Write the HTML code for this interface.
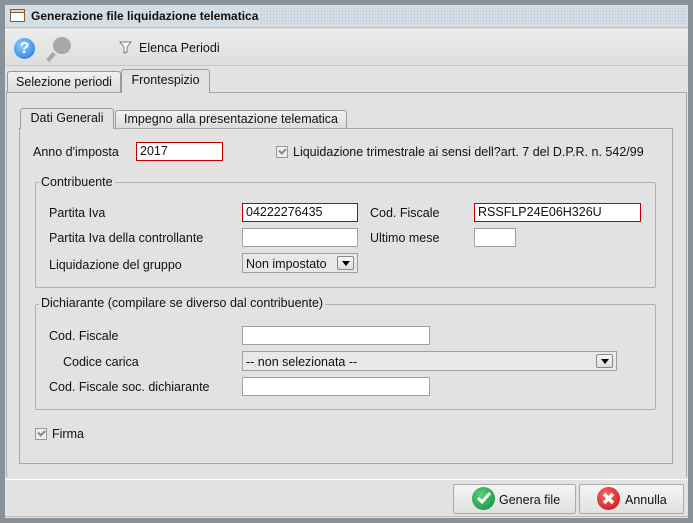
<!DOCTYPE html>
<html><head><meta charset="utf-8"><style>
*{box-sizing:border-box;margin:0;padding:0}
body{width:693px;height:523px;background:#8a9299;font-family:"Liberation Sans",sans-serif;font-size:12.5px;color:#111;position:relative;overflow:hidden}
.a{position:absolute}
.win{left:5px;top:5px;width:683px;height:513px;background:#e2e2e2}
.title{left:5px;top:5px;width:683px;height:23px;background:#d4dce4;border-bottom:1px solid #b8c0c8}
.inp{position:absolute;background:#fff;border:1px solid #a0a0a0;height:19px;font-size:12.5px;padding:1px 3px;line-height:15px}
.red{border-color:#c00000}
.lbl{position:absolute;font-size:12.5px}
.grp{position:absolute;border:1px solid #b0b0b0;border-radius:2px}
.grpt{position:absolute;background:#e2e2e2;padding:0 2px;font-size:12.5px}
.cb{position:absolute;width:12px;height:12px;border:1px solid #999;background:#eee}
.cb:after{content:"";position:absolute;left:2px;top:1px;width:5px;height:3px;border-left:2px solid #888;border-bottom:2px solid #888;transform:rotate(-45deg)}
.arr{position:absolute;width:17px;height:14px;border:1px solid #888;border-radius:2px;background:linear-gradient(#fafafa,#ddd)}
.arr:after{content:"";position:absolute;left:4px;top:4px;border-left:4px solid transparent;border-right:4px solid transparent;border-top:5px solid #000}
.tab{position:absolute;border:1px solid #999;border-bottom:none;border-radius:3px 3px 0 0;background:linear-gradient(#f2f2f2,#dcdcdc);font-size:12.5px;text-align:center}
.btn{position:absolute;border:1px solid #aaa;border-radius:2px;background:linear-gradient(#f6f6f6,#e0e0e0);font-size:12.5px}
</style></head><body>
<div class="a win"></div>
<div class="a title"></div>
<div class="a" style="left:260px;top:7px;width:426px;height:19px;background-image:radial-gradient(#b8c4d0 0.7px,transparent 0.8px);background-size:3px 3px"></div>
<div class="a" style="left:10px;top:9px;width:15px;height:13px;border:1px solid #8a5a30;background:#fff"><div style="height:3px;border-bottom:1px solid #8a5a30;background:#e8d8c0"></div></div>
<div class="lbl" style="left:31px;top:9px;font-weight:bold;font-size:12px">Generazione file liquidazione telematica</div>
<div class="a" style="left:5px;top:29px;width:683px;height:37px;background:linear-gradient(#ececec,#dedede);border-bottom:1px solid #c8c8c8"></div>
<div class="a" style="left:13px;top:37px;width:23px;height:23px;border-radius:50%;background:radial-gradient(circle at 40% 35%,#8fd0ff,#1e6fd8);border:1px solid #d8e8f8;color:#fff;font-weight:bold;font-size:16px;text-align:center;line-height:21px">?</div>
<div class="a" style="left:53px;top:37px;width:18px;height:17px;border-radius:50%;background:#a8a8a8"></div>
<div class="a" style="left:49px;top:52px;width:4px;height:10px;background:#a8a8a8;transform:rotate(40deg)"></div>
<svg class="a" style="left:119px;top:41px" width="13" height="13"><path d="M1 1h11l-4 5v5l-3 1V6z" fill="#fff" stroke="#777"/></svg>
<div class="lbl" style="left:139px;top:41px">Elenca Periodi</div>
<div class="a" style="left:6px;top:92px;width:681px;height:385px;border:1px solid #a8a8a8;border-bottom:none"></div>
<div class="tab" style="left:7px;top:71px;width:114px;height:21px;line-height:20px">Selezione periodi</div>
<div class="tab" style="left:121px;top:69px;width:89px;height:24px;line-height:20px;background:#e2e2e2;z-index:2">Frontespizio</div>
<div class="a" style="left:19px;top:128px;width:654px;height:336px;border:1px solid #a8a8a8"></div>
<div class="tab" style="left:20px;top:108px;width:94px;height:21px;line-height:18px;background:#e2e2e2;z-index:2">Dati Generali</div>
<div class="tab" style="left:115px;top:110px;width:232px;height:18px;line-height:17px">Impegno alla presentazione telematica</div>
<div class="lbl" style="left:33px;top:145px">Anno d'imposta</div>
<div class="inp red" style="left:136px;top:142px;width:87px">2017</div>
<div class="cb" style="left:276px;top:146px"></div>
<div class="lbl" style="left:293px;top:145px">Liquidazione trimestrale ai sensi dell?art. 7 del D.P.R. n. 542/99</div>
<div class="grp" style="left:35px;top:182px;width:621px;height:106px"></div>
<div class="grpt" style="left:39px;top:175px">Contribuente</div>
<div class="lbl" style="left:49px;top:206px">Partita Iva</div>
<div class="inp red" style="left:242px;top:203px;width:116px">04222276435</div>
<div class="lbl" style="left:370px;top:206px">Cod. Fiscale</div>
<div class="inp red" style="left:474px;top:203px;width:167px">RSSFLP24E06H326U</div>
<div class="lbl" style="left:49px;top:231px">Partita Iva della controllante</div>
<div class="inp" style="left:242px;top:228px;width:116px"></div>
<div class="lbl" style="left:370px;top:231px">Ultimo mese</div>
<div class="inp" style="left:474px;top:228px;width:42px"></div>
<div class="lbl" style="left:49px;top:258px">Liquidazione del gruppo</div>
<div class="a" style="left:242px;top:253px;width:116px;height:20px;border:1px solid #a0a0a0;background:#e8e8e8"></div>
<div class="lbl" style="left:246px;top:257px">Non impostato</div>
<div class="arr" style="left:337px;top:256px"></div>
<div class="grp" style="left:35px;top:304px;width:621px;height:106px"></div>
<div class="grpt" style="left:39px;top:296px">Dichiarante (compilare se diverso dal contribuente)</div>
<div class="lbl" style="left:49px;top:329px">Cod. Fiscale</div>
<div class="inp" style="left:242px;top:326px;width:188px"></div>
<div class="lbl" style="left:63px;top:355px">Codice carica</div>
<div class="a" style="left:242px;top:351px;width:375px;height:20px;border:1px solid #a0a0a0;background:#e8e8e8"></div>
<div class="lbl" style="left:246px;top:355px">-- non selezionata --</div>
<div class="arr" style="left:596px;top:354px"></div>
<div class="lbl" style="left:49px;top:380px">Cod. Fiscale soc. dichiarante</div>
<div class="inp" style="left:242px;top:377px;width:188px"></div>
<div class="cb" style="left:35px;top:428px"></div>
<div class="lbl" style="left:52px;top:427px">Firma</div>
<div class="a" style="left:5px;top:479px;width:683px;height:38px;border-top:1px solid #fff;border-bottom:1px solid #bbb"></div>
<div class="btn" style="left:453px;top:484px;width:123px;height:30px"></div>
<div class="a" style="left:472px;top:487px;width:23px;height:23px;border-radius:50%;background:radial-gradient(circle at 40% 35%,#5ed07a,#0c8a34)"></div>
<svg class="a" style="left:476px;top:491px" width="16" height="14"><path d="M2 7l4 4 8-9" fill="none" stroke="#fff" stroke-width="3"/></svg>
<div class="lbl" style="left:499px;top:493px">Genera file</div>
<div class="btn" style="left:579px;top:484px;width:105px;height:30px"></div>
<div class="a" style="left:597px;top:487px;width:23px;height:23px;border-radius:50%;background:radial-gradient(circle at 40% 35%,#ff6a6a,#c00c0c)"></div>
<svg class="a" style="left:602px;top:492px" width="13" height="13"><path d="M2 2l9 9M11 2l-9 9" stroke="#fff" stroke-width="3.5"/></svg>
<div class="lbl" style="left:625px;top:493px">Annulla</div>
</body></html>
